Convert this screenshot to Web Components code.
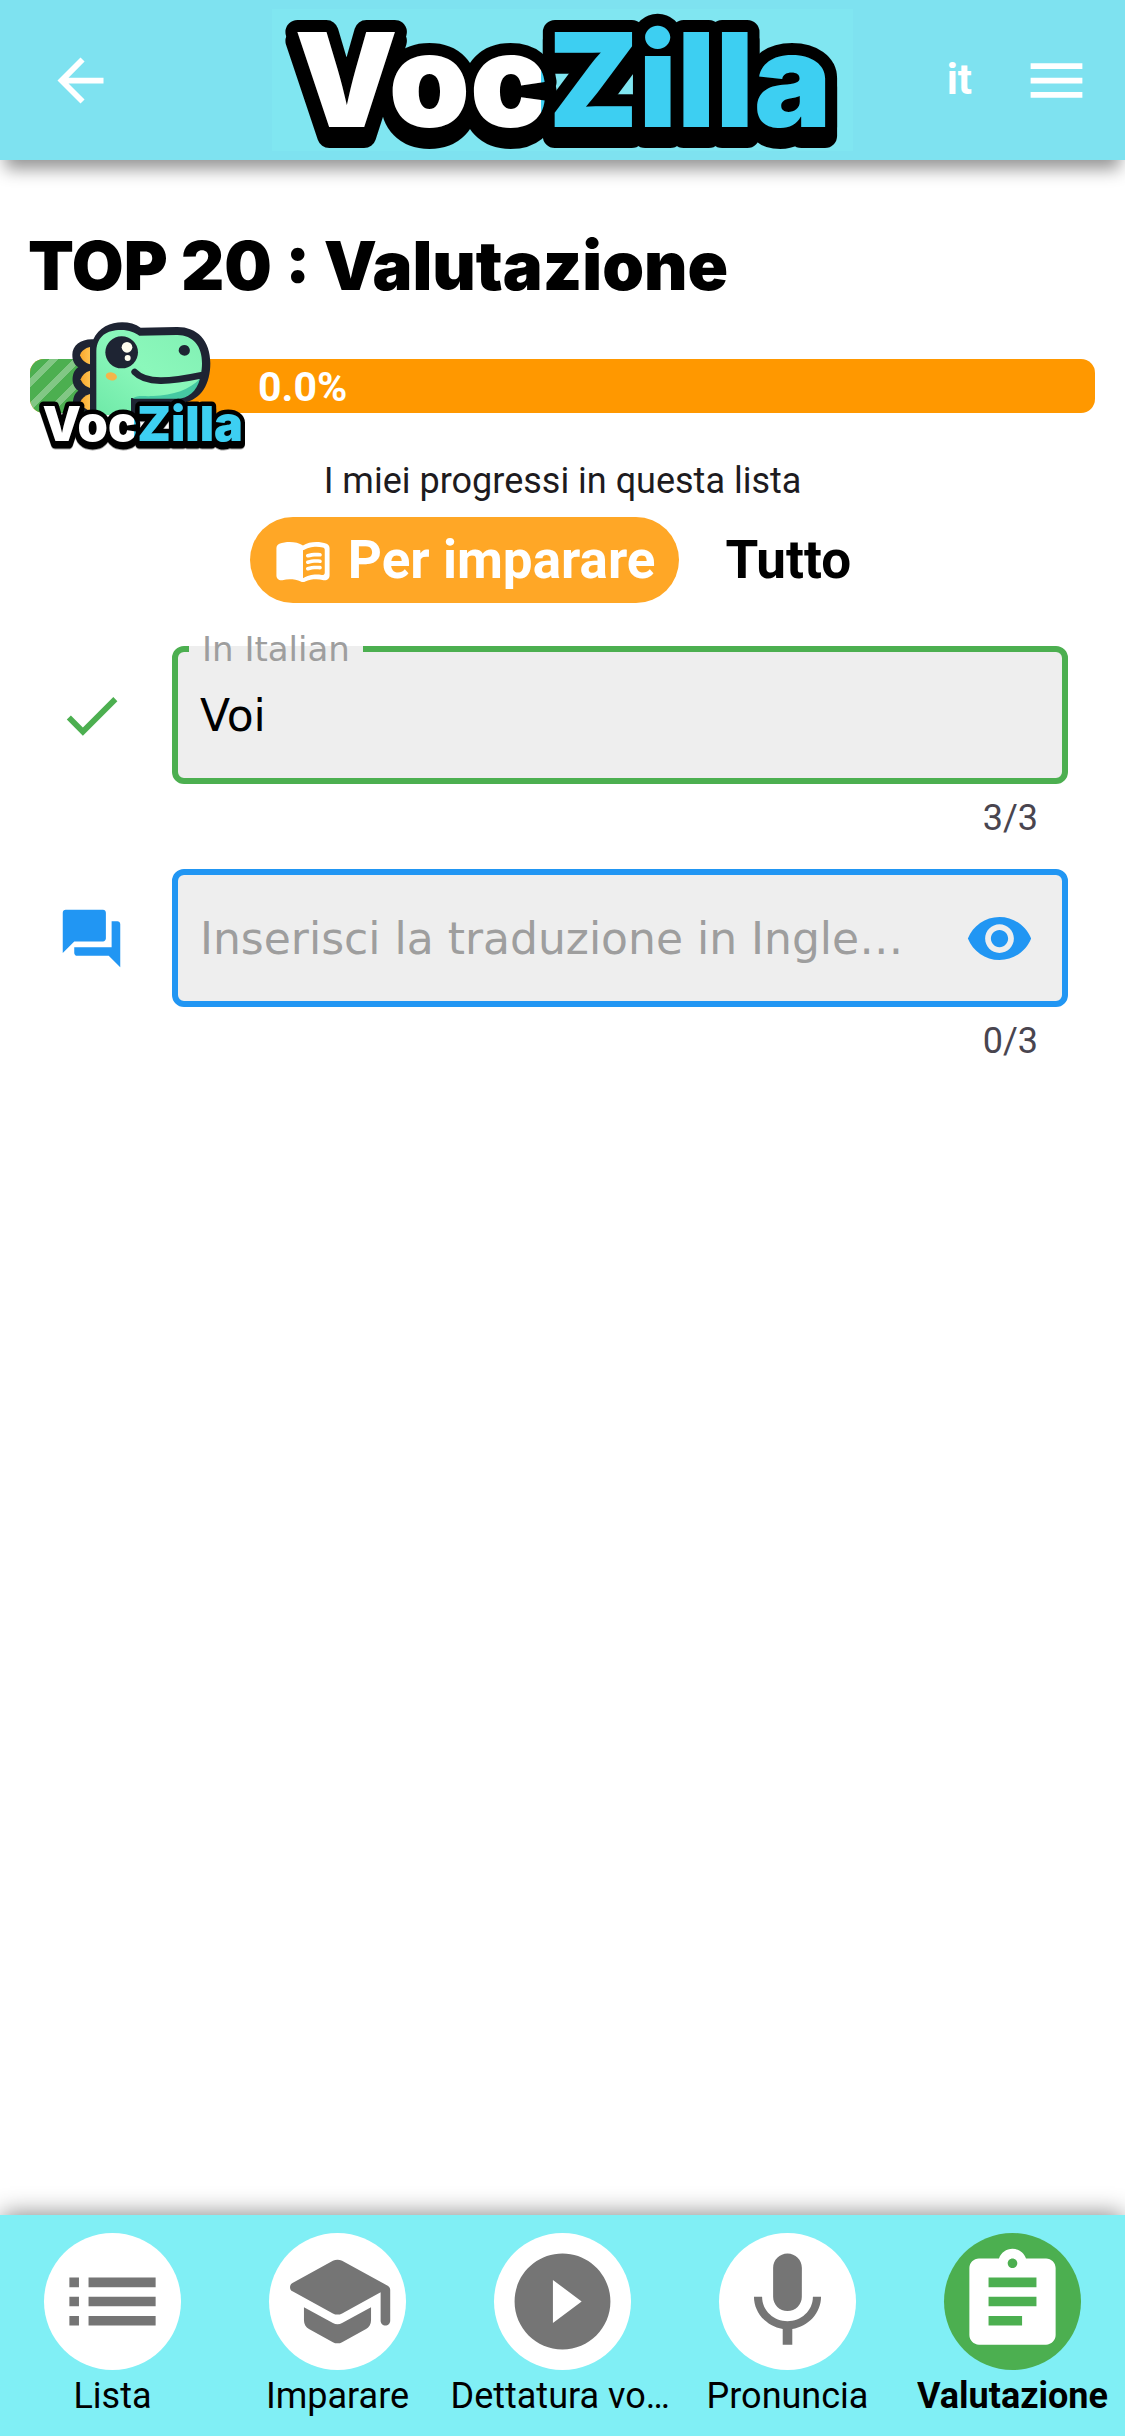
<!DOCTYPE html>
<html lang="it">
<head>
<meta charset="utf-8">
<meta name="viewport" content="width=device-width, initial-scale=1">
<title>VocZilla</title>
<style>
  body { margin: 0; background: #fff; font-family: Roboto, "Liberation Sans", sans-serif; }
</style>
</head>
<body>
<voc-app></voc-app>
<script>
const ICONS = {
  back: 'M20 11H7.83l5.59-5.59L12 4l-8 8 8 8 1.41-1.41L7.83 13H20v-2z',
  menu: 'M3 18h18v-2H3v2zm0-5h18v-2H3v2zm0-7v2h18V6H3z',
  check: 'M9 16.17L4.83 12l-1.42 1.41L9 19 21 7l-1.41-1.41z',
  chat: 'M21 6h-2v9H6v2c0 .55.45 1 1 1h11l4 4V7c0-.55-.45-1-1-1zm-4 6V3c0-.55-.45-1-1-1H3c-.55 0-1 .45-1 1v14l4-4h10c.55 0 1-.45 1-1z',
  eye: 'M12 4.5C7 4.5 2.73 7.61 1 12c1.73 4.39 6 7.5 11 7.5s9.27-3.11 11-7.5c-1.73-4.39-6-7.5-11-7.5zM12 17c-2.76 0-5-2.24-5-5s2.24-5 5-5 5 2.24 5 5-2.24 5-5 5zm0-8c-1.66 0-3 1.34-3 3s1.34 3 3 3 3-1.34 3-3-1.34-3-3-3z',
  list: 'M3 13h2v-2H3v2zm0 4h2v-2H3v2zm0-8h2V7H3v2zm4 4h14v-2H7v2zm0 4h14v-2H7v2zM7 7v2h14V7H7z',
  school: 'M5 13.18v2.81c0 .73.4 1.41 1.04 1.76l5 2.73c.6.33 1.32.33 1.92 0l5-2.73c.64-.35 1.04-1.03 1.04-1.76v-2.81l-6.04 3.3c-.6.33-1.32.33-1.92 0L5 13.18zm6.04-9.66l-8.43 4.6c-.69.38-.69 1.38 0 1.76l8.43 4.6c.6.33 1.32.33 1.92 0L21 10.09V16c0 .55.45 1 1 1s1-.45 1-1V9.59c0-.37-.2-.7-.52-.88l-9.52-5.19c-.6-.32-1.32-.32-1.92 0z',
  play: 'M12 2C6.48 2 2 6.48 2 12s4.48 10 10 10 10-4.48 10-10S17.52 2 12 2zm-2 14.5v-9l6 4.5-6 4.5z',
  mic: 'M12 14c1.66 0 2.99-1.34 2.99-3L15 5c0-1.66-1.34-3-3-3S9 3.34 9 5v6c0 1.66 1.34 3 3 3zm5.3-3c0 3-2.54 5.1-5.3 5.1S6.7 14 6.7 11H5c0 3.41 2.72 6.23 6 6.72V21h2v-3.28c3.28-.48 6-3.3 6-6.72h-1.7z',
  assignment: 'M19 3h-4.18C14.4 1.84 13.3 1 12 1c-1.3 0-2.4.84-2.82 2H5c-1.1 0-2 .9-2 2v14c0 1.1.9 2 2 2h14c1.1 0 2-.9 2-2V5c0-1.1-.9-2-2-2zm-7 0c.55 0 1 .45 1 1s-.45 1-1 1-1-.45-1-1 .45-1 1-1zm2 14H7v-2h7v2zm3-4H7v-2h10v2zm0-4H7V7h10v2z',
  book: 'M17.5 4.5c-1.95 0-4.05.4-5.5 1.5-1.45-1.1-3.55-1.5-5.5-1.5-1.45 0-2.99.22-4.28.79C1.49 5.62 1 6.33 1 7.14v11.28c0 1.3 1.22 2.26 2.48 1.94.98-.25 2.02-.36 3.02-.36 1.56 0 3.22.26 4.56.92.6.3 1.28.3 1.87 0 1.34-.67 3-.92 4.56-.92 1 0 2.04.11 3.02.36 1.26.33 2.48-.63 2.48-1.94V7.14c0-.81-.49-1.52-1.22-1.85-1.28-.57-2.82-.79-4.27-.79zM21 17.23c0 .63-.58 1.09-1.2.98-.75-.14-1.53-.2-2.3-.2-1.7 0-4.15.65-5.5 1.5V8c1.35-.85 3.8-1.5 5.5-1.5.92 0 1.83.09 2.7.28.46.1.8.51.8.98v9.47z M13.98 11.01c-.32 0-.61-.2-.71-.52-.13-.39.09-.82.48-.94 1.54-.5 3.53-.66 5.36-.45.41.05.71.42.66.83-.05.41-.42.71-.83.66-1.62-.19-3.39-.04-4.73.39-.08.01-.16.03-.23.03z M13.98 13.67c-.32 0-.61-.2-.71-.52-.13-.39.09-.82.48-.94 1.54-.5 3.53-.66 5.36-.45.41.05.71.42.66.83-.05.41-.42.71-.83.66-1.62-.19-3.39-.04-4.73.39-.08.01-.16.03-.23.03z M13.98 16.33c-.32 0-.61-.2-.71-.52-.13-.39.09-.82.48-.94 1.54-.5 3.53-.66 5.36-.45.41.05.71.42.66.83-.05.41-.42.71-.83.66-1.62-.19-3.39-.04-4.73.39-.08.01-.16.03-.23.03z'
};

class VocBase extends HTMLElement {
  connectedCallback() {
    if (this.shadowRoot) return;
    this.attachShadow({ mode: 'open' }).innerHTML =
      '<style>*{box-sizing:border-box}button{border:0;padding:0;background:none;font:inherit;color:inherit;cursor:pointer}' +
      this.css() + '</style>' + this.html();
  }
}

customElements.define('voc-icon', class extends VocBase {
  css() { return ':host{display:block;width:var(--icon,69px);height:var(--icon,69px);flex:none}svg{display:block;width:100%;height:100%;fill:currentColor}'; }
  html() { return `<svg viewBox="0 0 24 24" aria-hidden="true"><path d="${ICONS[this.getAttribute('name')]}"/></svg>`; }
});

customElements.define('voc-logo', class extends VocBase {
  css() {
    return `:host{display:block}
      svg{display:block;width:100%;height:auto;overflow:visible}
      text{font:900 130px Inter,"Open Sans",sans-serif;stroke:#000;stroke-width:24px;stroke-linejoin:round;paint-order:stroke;filter:drop-shadow(0 9px 0 #000)}`;
  }
  html() {
    return `<svg viewBox="0 0 581 142">
      <defs><linearGradient id="ink" gradientUnits="userSpaceOnUse" x1="0" y1="0" x2="581" y2="0">
        <stop offset="0.463" stop-color="#fff"/><stop offset="0.463" stop-color="#3dcff2"/></linearGradient></defs>
      <text x="291" y="118" text-anchor="middle" fill="url(#ink)">VocZilla</text></svg>`;
  }
});

customElements.define('voc-header', class extends VocBase {
  css() {
    return `:host{display:block;position:relative;z-index:1}
      header{display:grid;grid-template-columns:1fr minmax(0,581px) 1fr;align-items:center;height:160px;padding:0 34px 0 46px;background:#7ee2f0;color:#fff;box-shadow:0 14px 16px -5px rgba(0,0,0,.42)}
      voc-logo{background:#80e6f1;margin-left:-6px;margin-right:6px}
      .end{display:flex;align-items:center;justify-content:flex-end;gap:50px}
      .lang{font-weight:700;font-size:42px;line-height:48px}`;
  }
  html() {
    return `<header>
      <button aria-label="Indietro"><voc-icon name="back"></voc-icon></button>
      <voc-logo></voc-logo>
      <div class="end"><button class="lang">it</button><button aria-label="Menu"><voc-icon name="menu"></voc-icon></button></div>
    </header>`;
  }
});

customElements.define('voc-dino', class extends VocBase {
  css() {
    return `:host{display:block;width:225px}
      .face{display:block;width:100%;height:auto}
      voc-logo{width:217px;margin:-53px 0 0 4px;position:relative}`;
  }
  html() {
    return `<svg class="face" viewBox="60 54 675 396" aria-hidden="true">
      <defs>
        <linearGradient id="skin" x1="0" y1="1" x2="1" y2="0"><stop offset="0" stop-color="#6fe9a8"/><stop offset=".5" stop-color="#8bf8bb"/><stop offset="1" stop-color="#82f0b4"/></linearGradient>
        <linearGradient id="horn" x1="0" y1="0" x2="1" y2="0"><stop offset="0" stop-color="#f9a72c"/><stop offset="1" stop-color="#ffc24f"/></linearGradient>
      </defs>
      <g fill="#1e2433">
        <path d="M250 118C214 116 187 136 187 164C187 182 193 194 205 202C184 214 180 256 205 272C190 282 186 304 190 330L380 345L380 308L520 308C575 300 601 250 601 190C601 120 560 80 500 81L392 83C352 55 275 62 250 118Z"/>
      </g>
      <g fill="url(#horn)">
        <path d="M240 141V193C226 189 214 179 210 166C213 153 226 144 240 141Z"/>
        <path d="M240 212V264C226 260 216 250 212 238C216 225 226 216 240 212Z"/>
        <path d="M240 282V334C226 326 214 318 211 306C216 294 226 286 240 282Z"/>
      </g>
      <path fill="url(#skin)" d="M259 345V152C262 108 290 90 333 90C358 90 374 98 388 107L500 105C548 104 577 138 576 190C576 240 555 282 510 294L363 294V345Z"/>
      <path fill="#45c9a2" d="M570 236C560 274 534 296 500 296H368C382 284 400 290 430 288C490 286 540 268 570 236Z"/>
      <path fill="none" stroke="#1e2433" stroke-width="20" stroke-linecap="round" d="M374 216C408 252 478 246 574 226"/>
      <ellipse cx="335" cy="157" rx="49" ry="48" fill="#1e2433"/>
      <circle cx="351" cy="142" r="16" fill="#fffdf0"/><circle cx="353" cy="174" r="9" fill="#fffdf0"/>
      <ellipse cx="523" cy="151" rx="17" ry="16" fill="#1e2433" transform="rotate(20 523 151)"/>
      <ellipse cx="304" cy="229" rx="17" ry="12" fill="#f5b54a" transform="rotate(12 304 229)"/>
    </svg><voc-logo></voc-logo>`;
  }
});

customElements.define('voc-progress', class extends VocBase {
  css() {
    return `:host{display:block;position:relative}
      .bar{display:flex;height:54px;border-radius:14px;overflow:hidden;background:#ff9800;color:#fff;font-weight:700;font-size:41px;line-height:56px}
      .done{flex:none;width:140px;margin-right:88px;background:repeating-linear-gradient(135deg,#82c785 0 3px,#4caf50 3px 14px,#82c785 14px 17px)}
      voc-dino{position:absolute;left:0;top:-41px}`;
  }
  html() {
    return `<div class="bar" role="progressbar" aria-valuemin="0" aria-valuemax="100" aria-valuenow="0"><span class="done"></span><span>0.0%</span></div><voc-dino></voc-dino>`;
  }
});

customElements.define('voc-filter', class extends VocBase {
  css() {
    return `:host{display:flex;justify-content:center;gap:22px;font-weight:700;font-size:53px;line-height:60px;--icon:58px}
      button{display:flex;align-items:center;gap:16px;height:86px;padding:0 24px;border-radius:43px;color:#000}
      button[aria-pressed=true]{background:#ffa726;color:#fff}`;
  }
  html() {
    return `<button aria-pressed="true"><voc-icon name="book"></voc-icon>Per imparare</button><button aria-pressed="false">Tutto</button>`;
  }
});

customElements.define('voc-field', class extends VocBase {
  css() {
    return `:host{display:grid;grid-template-columns:69px 1fr;column-gap:46px;row-gap:10px;align-items:center;padding:0 57px}
      voc-icon{color:var(--tone)}
      .box{position:relative;display:flex;align-items:center;height:138px;padding:0 28px 0 22px;border:6px solid var(--tone);border-radius:12px;background:#eee;font-family:"DejaVu Sans",sans-serif}
      label{position:absolute;left:11px;top:-24px;padding:0 13px;font-size:34px;line-height:42px;color:#9e9e9e;background:linear-gradient(#fff 18px,#eee 18px)}
      input{flex:1;min-width:0;height:72px;padding:0;border:0;outline:0;background:none;font:inherit;font-size:44px;color:#000;text-overflow:ellipsis}
      input::placeholder{color:#9e9e9e;opacity:1}
      button{margin-left:60px}
      .count{grid-column:2;padding-right:30px;text-align:right;font-size:36px;line-height:48px;color:#49454f}`;
  }
  html() {
    const a = n => this.getAttribute(n) || '';
    return `<voc-icon name="${a('icon')}"></voc-icon>
      <div class="box">${a('label') ? `<label for="f">${a('label')}</label>` : ''}
      <input id="f" type="text" value="${a('value')}" ${a('hint') ? `placeholder="${a('hint')}" aria-label="${a('hint')}"` : ''}>
      ${this.hasAttribute('reveal') ? '<button aria-label="Mostra"><voc-icon name="eye"></voc-icon></button>' : ''}</div>
      <div class="count"><slot></slot></div>`;
  }
});

customElements.define('voc-tab', class extends VocBase {
  css() {
    return `:host{display:block;flex:1 1 0;min-width:0;--icon:115px}
      a{display:flex;flex-direction:column;align-items:center;gap:4px;color:#000;text-decoration:none;font-size:36px;line-height:44px}
      .disc{display:grid;place-items:center;width:137px;height:137px;border-radius:50%;background:#fff;color:#757575}
      .text{max-width:224px;overflow:hidden;text-overflow:ellipsis;white-space:nowrap}
      :host([active]) .disc{background:#4caf50;color:#fff}
      :host([active]) .text{font-weight:700}`;
  }
  html() {
    return `<a href="#"><span class="disc"><voc-icon name="${this.getAttribute('icon')}"></voc-icon></span><span class="text"><slot></slot></span></a>`;
  }
});

customElements.define('voc-app', class extends VocBase {
  css() {
    return `:host{display:flex;flex-direction:column;min-height:100vh}
      main{flex:1;padding-bottom:40px}
      h1{margin:70px 28px 0;font:900 67px/72px Inter,"Open Sans",sans-serif;color:#000}
      voc-progress{margin:57px 30px 0}
      p{margin:46px 30px 0;text-align:center;font-size:36px;line-height:44px;color:#1d1b20}
      voc-filter{margin-top:14px}
      voc-field{--tone:#4caf50;margin-top:43px}
      voc-field + voc-field{--tone:#2196f3;margin-top:27px}
      nav{display:flex;padding:18px 0 18px;background:#80eff5;box-shadow:0 -4px 22px -2px rgba(0,0,0,.45)}`;
  }
  html() {
    return `<voc-header></voc-header>
    <main>
      <h1>TOP 20 : Valutazione</h1>
      <voc-progress></voc-progress>
      <p>I miei progressi in questa lista</p>
      <voc-filter></voc-filter>
      <voc-field icon="check" label="In Italian" value="Voi">3/3</voc-field>
      <voc-field icon="chat" hint="Inserisci la traduzione in Inglese" reveal>0/3</voc-field>
    </main>
    <nav>
      <voc-tab icon="list">Lista</voc-tab>
      <voc-tab icon="school">Imparare</voc-tab>
      <voc-tab icon="play">Dettatura vocale</voc-tab>
      <voc-tab icon="mic">Pronuncia</voc-tab>
      <voc-tab icon="assignment" active>Valutazione</voc-tab>
    </nav>`;
  }
});
</script>
</body>
</html>
